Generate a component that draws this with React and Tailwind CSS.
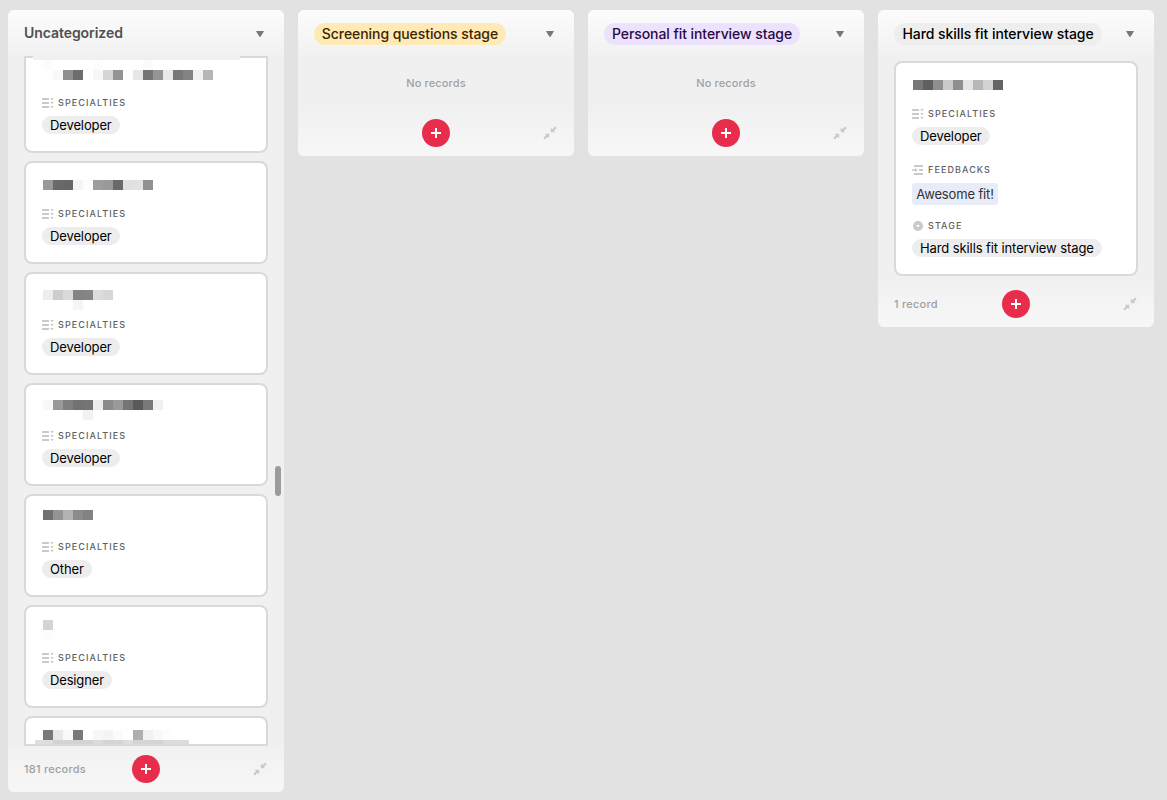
import React from "react";

// Redacted names: each cell is [column, row, fill] on a 10px grid.
const cards = [
  {
    value: "Developer",
    dy: 20,
    cells: [
      [1, 0, "#f8f8f8"], [2, 0, "#8f8f8f"], [3, 0, "#6d6d6d"], [5, 0, "#f7f7f7"], [6, 0, "#d5d5d5"], [7, 0, "#939393"],
      [8, 0, "#fdfdfd"], [9, 0, "#e6e6e6"], [10, 0, "#747474"], [11, 0, "#949494"], [12, 0, "#e9e9e9"], [13, 0, "#777777"],
      [14, 0, "#838383"], [15, 0, "#f1f1f1"], [16, 0, "#b6b6b6"], [0, -1, "#fcfcfc"], [5, -1, "#fdfdfd"], [10, -1, "#fbfbfb"],
    ],
  },
  {
    value: "Developer",
    dy: 19,
    cells: [
      [0, 0, "#999999"], [1, 0, "#696969"], [2, 0, "#676767"], [3, 0, "#f5f5f5"], [4, 0, "#fdfdfd"], [5, 0, "#9d9d9d"],
      [6, 0, "#999999"], [7, 0, "#696969"], [8, 0, "#e0e0e0"], [9, 0, "#e2e2e2"], [10, 0, "#919191"],
    ],
  },
  {
    value: "Developer",
    dy: 18,
    cells: [
      [0, 0, "#ededed"], [1, 0, "#cdcdcd"], [2, 0, "#dadada"], [3, 0, "#838383"], [4, 0, "#858585"], [5, 0, "#dcdcdc"],
      [6, 0, "#d7d7d7"], [3, 1, "#f5f5f5"],
    ],
  },
  {
    value: "Developer",
    dy: 17,
    cells: [
      [0, 0, "#f8f8f8"], [1, 0, "#999999"], [2, 0, "#7f7f7f"], [3, 0, "#727272"], [4, 0, "#747474"], [5, 0, "#ededed"],
      [6, 0, "#8b8b8b"], [7, 0, "#999999"], [8, 0, "#757575"], [9, 0, "#595959"], [10, 0, "#797979"], [11, 0, "#f1f1f1"],
      [4, 1, "#f2f2f2"],
    ],
  },
  {
    value: "Other",
    dy: 16,
    cells: [[0, 0, "#707070"], [1, 0, "#949494"], [2, 0, "#b3b3b3"], [3, 0, "#8b8b8b"], [4, 0, "#828282"]],
  },
  { value: "Designer", dy: 15, cells: [[0, 0, "#d4d4d4"], [0, 1, "#fdfdfd"]] },
];

const lastCells = [
  [0, 0, "#797979"], [1, 0, "#e9e9e9"], [2, 0, "#f9f9f9"], [3, 0, "#797979"], [5, 0, "#f7f7f7"], [6, 0, "#f4f4f4"],
  [7, 0, "#fbfbfb"], [9, 0, "#afafaf"], [10, 0, "#f1f1f1"], [11, 0, "#f9f9f9"], [12, 0, "#fdfdfd"],
  [0, 1, "#dedede"], [1, 1, "#d3d3d3"], [2, 1, "#d3d3d3"], [3, 1, "#d3d3d3"], [4, 1, "#d4d4d4"], [5, 1, "#dadada"],
  [6, 1, "#d4d4d4"], [7, 1, "#d4d4d4"], [8, 1, "#dedede"], [9, 1, "#d4d4d4"], [10, 1, "#d4d4d4"], [11, 1, "#d4d4d4"],
  [12, 1, "#dcdcdc"], [13, 1, "#dcdcdc"],
];

const hardSkillsCells = [
  [0, 0, "#777777"], [1, 0, "#5f5f5f"], [2, 0, "#8f8f8f"], [3, 0, "#cacaca"], [4, 0, "#8f8f8f"], [5, 0, "#e5e5e5"],
  [6, 0, "#b8b8b8"], [7, 0, "#d2d2d2"], [8, 0, "#656565"],
];

// dy is the distance from the card's outer top edge to the first row.
function Mosaic({ cells, dy }) {
  return (
    <svg className="block h-11 w-[240px] shrink-0" viewBox="0 0 240 44" shapeRendering="crispEdges" aria-hidden="true">
      {cells.map(([x, y, fill]) => (
        <rect key={`${x}-${y}`} x={17 + x * 10} y={dy - 2 + y * 10} width="10" height="10" fill={fill} />
      ))}
    </svg>
  );
}

function MultiSelectIcon() {
  return (
    <svg className="h-3 w-3 shrink-0" viewBox="0 0 12 12" fill="#c9c9c9" aria-hidden="true">
      <rect x="0" y="1" width="7" height="2" rx="0.6" />
      <rect x="0" y="5" width="7" height="2" rx="0.6" />
      <rect x="0" y="9" width="7" height="2" rx="0.6" />
      <path d="M8.2 1h3.6L10 3.2zM8.2 5h3.6L10 7.2zM8.2 9h3.6L10 11.2z" />
    </svg>
  );
}

function LinkedIcon() {
  return (
    <svg className="h-3 w-3 shrink-0" viewBox="0 0 12 12" fill="#c9c9c9" aria-hidden="true">
      <rect x="2" y="1" width="9" height="2" rx="0.5" />
      <rect x="7" y="5" width="4" height="2" rx="0.5" />
      <rect x="2" y="9" width="9" height="2" rx="0.5" />
      <path d="M0 5.3h3V3.8L5.6 6 3 8.2V6.7H0z" />
    </svg>
  );
}

function SelectIcon() {
  return (
    <svg className="h-3 w-3 shrink-0" viewBox="0 0 12 12" aria-hidden="true">
      <circle cx="6" cy="6" r="5" fill="#c9c9c9" />
      <path d="M3.9 5h4.2L6 7.4z" fill="#fff" />
    </svg>
  );
}

function Field({ icon, label, children }) {
  return (
    <div className="flex h-14 shrink-0 flex-col items-start gap-[7px] pl-4">
      <div className="flex h-[13px] items-center gap-1">
        {icon}
        <span className="text-[9px] leading-[13px] font-medium tracking-[1.09px] text-[#606060]">{label}</span>
      </div>
      {children}
    </div>
  );
}

function Tag({ children, tracking = "" }) {
  return (
    <span className={`flex h-[18px] items-center rounded-full bg-[#ededed] px-2 text-[13px] leading-[18px] whitespace-nowrap text-black ${tracking}`}>
      {children}
    </span>
  );
}

const tagTracking = {
  Developer: "tracking-[-0.12px]",
  Other: "tracking-[-0.1px]",
  Designer: "tracking-[-0.15px]",
};

function Specialties({ value }) {
  return (
    <Field icon={<MultiSelectIcon />} label="SPECIALTIES">
      <Tag tracking={tagTracking[value]}>{value}</Tag>
    </Field>
  );
}

function Card({ className = "", children }) {
  return (
    <article className={`flex w-[244px] shrink-0 flex-col overflow-hidden border-2 border-[#d9d9d9] bg-white ${className}`}>
      {children}
    </article>
  );
}

function ColumnHeader({ children }) {
  return (
    <header className="flex h-[46px] shrink-0 items-center justify-between bg-linear-to-b from-[#fcfcfc] to-[#f1f1f1] pr-5 pl-4">
      {children}
      <svg className="mt-0.5 h-[6px] w-2" viewBox="0 0 8 6" fill="#777" aria-hidden="true">
        <path d="M0.5 0h7q.6.1.3.6L4.5 5.7q-.5.5-1 0L.2.6Q0 .1.5 0z" />
      </svg>
    </header>
  );
}

function StageTitle({ className, children }) {
  return (
    <h2 className={`mt-0.5 flex h-[22px] items-center justify-center rounded-full text-sm font-[550] whitespace-nowrap ${className}`}>
      {children}
    </h2>
  );
}

function ColumnFooter({ count }) {
  return (
    <footer className="grid h-[46px] shrink-0 grid-cols-3 items-center bg-linear-to-b from-[#f1f1f1] to-[#f7f7f7] px-4">
      <span className="text-[11px] font-[550] tracking-[0.24px] whitespace-nowrap text-[#a0a0a0]">{count}</span>
      <button className="flex h-7 w-7 items-center justify-center justify-self-center rounded-full bg-[#e72d4b]" aria-label="Add record">
        <svg className="h-2.5 w-2.5" viewBox="0 0 10 10" stroke="#fff" strokeWidth="2" aria-hidden="true">
          <path d="M5 0v10M0 5h10" />
        </svg>
      </button>
      <svg className="mr-px h-3.5 w-3.5 justify-self-end" viewBox="0 0 14 14" fill="#c9c9c9" aria-hidden="true">
        <path d="M7.8 1.8v4.4h4.4l-1.3-1.4 2.8-2.8L12.2.4 9.3 3.2z" />
        <path d="M6.2 12.2V7.8H1.8l1.3 1.4L.3 12l1.5 1.6 2.9-2.8z" />
      </svg>
    </footer>
  );
}

function Column({ className = "", children }) {
  return (
    <section className={`flex w-[276px] shrink-0 flex-col overflow-hidden rounded-[6px] bg-[#f0f0f0] ${className}`}>
      {children}
    </section>
  );
}

function EmptyColumn({ title, titleClass }) {
  return (
    <Column>
      <ColumnHeader>
        <StageTitle className={titleClass}>{title}</StageTitle>
      </ColumnHeader>
      <p className="flex h-[54px] items-center justify-center text-[11px] font-[550] tracking-[0.14px] text-[#a0a0a0]">No records</p>
      <ColumnFooter count="" />
    </Column>
  );
}

export default function App() {
  return (
    <main className="flex h-[800px] w-[1167px] items-start gap-3.5 overflow-hidden bg-[#e2e2e2] pt-2.5 pl-2 font-[Inter,sans-serif] antialiased">
      <Column className="relative h-[782px]">
        <ColumnHeader>
          <h2 className="text-sm font-semibold tracking-[-0.06px] text-[#505050]">Uncategorized</h2>
        </ColumnHeader>
        <div className="flex h-[690px] flex-col gap-2 overflow-hidden px-4">
          {cards.map((card, i) =>
            i === 0 ? (
              <Card key={i} className="h-[97px] justify-end rounded-b-lg">
                <div className="-mb-px flex flex-col">
                  <Mosaic cells={card.cells} dy={card.dy} />
                  <Specialties value={card.value} />
                </div>
              </Card>
            ) : (
              <Card key={i} className="h-[103px] rounded-lg">
                <Mosaic cells={card.cells} dy={card.dy} />
                <Specialties value={card.value} />
              </Card>
            )
          )}
          <Card className="h-[30px] rounded-t-lg">
            <svg className="block h-[26px] w-[240px] shrink-0" viewBox="0 0 240 26" shapeRendering="crispEdges" aria-hidden="true">
              <rect x="9" y="22" width="8" height="4" fill="#dedede" />
              {lastCells.map(([x, y, fill]) => (
                <rect key={`${x}-${y}`} x={17 + x * 10} y={12 + y * 10} width={x === 13 ? 16 : 10} height="10" fill={fill} />
              ))}
            </svg>
          </Card>
        </div>
        <ColumnFooter count="181 records" />
        <div className="absolute top-11 left-[25px] h-1.5 w-[207px] bg-[#f0f0f0]" />
        <div className="absolute top-[456px] right-[3px] h-[30px] w-1.5 rounded-full bg-[#9c9c9c]" />
      </Column>

      <EmptyColumn title="Screening questions stage" titleClass="w-[192px] bg-[#ffeab6] text-[#3b2501] tracking-[-0.07px]" />
      <EmptyColumn title="Personal fit interview stage" titleClass="w-[196px] bg-[#ede2fe] text-[#280b42] tracking-[-0.07px]" />

      <Column>
        <ColumnHeader>
          <StageTitle className="w-[208px] bg-[#eeeeee] text-black tracking-[-0.06px]">Hard skills fit interview stage</StageTitle>
        </ColumnHeader>
        <div className="px-4 py-[5px]">
          <Card className="h-[215px] rounded-lg">
            <Mosaic cells={hardSkillsCells} dy={19} />
            <Specialties value="Developer" />
            <Field icon={<LinkedIcon />} label="FEEDBACKS">
              <span className="flex h-[22px] w-[86px] shrink-0 items-center justify-center rounded-[3px] bg-[#e8ecf8] pt-0.5 text-[13px] tracking-[-0.15px] whitespace-nowrap text-[#333]">
                Awesome fit!
              </span>
            </Field>
            <Field icon={<SelectIcon />} label="STAGE">
              <Tag tracking="tracking-[-0.1px]">Hard skills fit interview stage</Tag>
            </Field>
          </Card>
        </div>
        <ColumnFooter count="1 record" />
      </Column>
    </main>
  );
}
